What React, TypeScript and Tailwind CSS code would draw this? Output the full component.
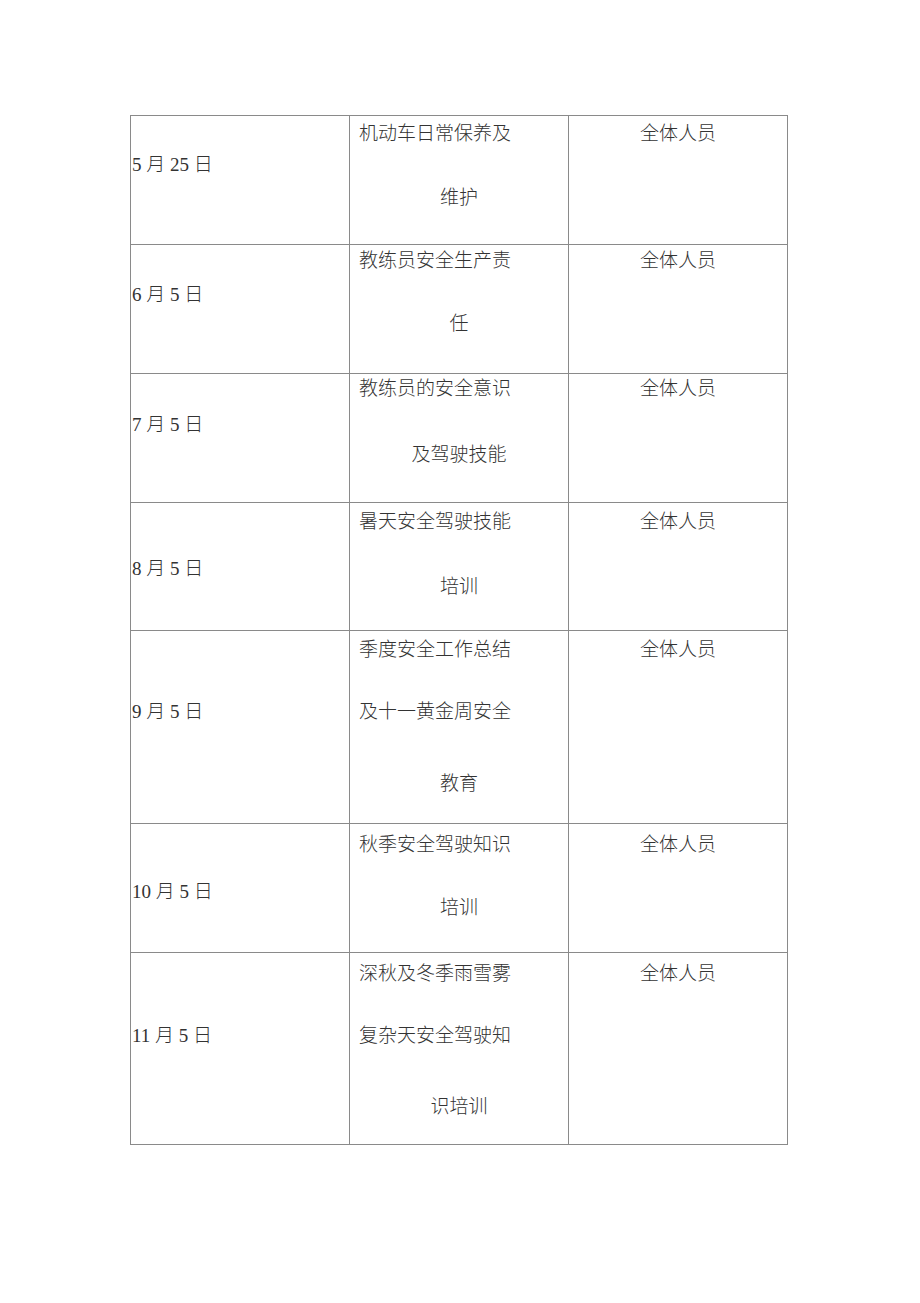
import React from "react";

const cjk = { fontFamily: '"Noto Sans CJK SC", "Noto Sans", sans-serif' };
const dateFont = { fontFamily: '"Liberation Serif", "Noto Sans CJK SC", serif' };

function Line({ children, className = "" }: { children: React.ReactNode; className?: string }) {
  return <div className={`h-[24px] leading-[24px] whitespace-nowrap ${className}`}>{children}</div>;
}

export default function App() {
  return (
    <div className="min-h-[1303px] w-[920px] bg-white text-[19px] font-light text-[#333333]" style={cjk}>
      <div className="pt-[115px] pl-[130px]">
        <div className="w-[658px] border-l border-t border-[#8a8a8a]">
          {/* Row 1 */}
          <div className="grid h-[129px] grid-cols-[219px_219px_219px]">
            <div className="border-r border-b border-[#8a8a8a] pl-[1px] pt-[35px]"><Line><span style={dateFont}>5 月 25 日</span></Line></div>
            <div className="flex flex-col border-r border-b border-[#8a8a8a] pt-[4px]">
              <Line className="pl-[9px]">机动车日常保养及</Line>
              <Line className="mt-[40px] text-center">维护</Line>
            </div>
            <div className="border-r border-b border-[#8a8a8a] pt-[4px]"><Line className="text-center">全体人员</Line></div>
          </div>
          {/* Row 2 */}
          <div className="grid h-[129px] grid-cols-[219px_219px_219px]">
            <div className="border-r border-b border-[#8a8a8a] pl-[1px] pt-[36px]"><Line><span style={dateFont}>6 月 5 日</span></Line></div>
            <div className="flex flex-col border-r border-b border-[#8a8a8a] pt-[2px]">
              <Line className="pl-[9px]">教练员安全生产责</Line>
              <Line className="mt-[39px] text-center">任</Line>
            </div>
            <div className="border-r border-b border-[#8a8a8a] pt-[2px]"><Line className="text-center">全体人员</Line></div>
          </div>
          {/* Row 3 */}
          <div className="grid h-[129px] grid-cols-[219px_219px_219px]">
            <div className="border-r border-b border-[#8a8a8a] pl-[1px] pt-[37px]"><Line><span style={dateFont}>7 月 5 日</span></Line></div>
            <div className="flex flex-col border-r border-b border-[#8a8a8a] pt-[1px]">
              <Line className="pl-[9px]">教练员的安全意识</Line>
              <Line className="mt-[42px] text-center">及驾驶技能</Line>
            </div>
            <div className="border-r border-b border-[#8a8a8a] pt-[1px]"><Line className="text-center">全体人员</Line></div>
          </div>
          {/* Row 4 */}
          <div className="grid h-[128px] grid-cols-[219px_219px_219px]">
            <div className="border-r border-b border-[#8a8a8a] pl-[1px] pt-[52px]"><Line><span style={dateFont}>8 月 5 日</span></Line></div>
            <div className="flex flex-col border-r border-b border-[#8a8a8a] pt-[5px]">
              <Line className="pl-[9px]">暑天安全驾驶技能</Line>
              <Line className="mt-[41px] text-center">培训</Line>
            </div>
            <div className="border-r border-b border-[#8a8a8a] pt-[5px]"><Line className="text-center">全体人员</Line></div>
          </div>
          {/* Row 5 */}
          <div className="grid h-[193px] grid-cols-[219px_219px_219px]">
            <div className="border-r border-b border-[#8a8a8a] pl-[1px] pt-[67px]"><Line><span style={dateFont}>9 月 5 日</span></Line></div>
            <div className="flex flex-col border-r border-b border-[#8a8a8a] pt-[5px]">
              <Line className="pl-[9px]">季度安全工作总结</Line>
              <Line className="mt-[38px] pl-[9px]">及十一黄金周安全</Line>
              <Line className="mt-[48px] text-center">教育</Line>
            </div>
            <div className="border-r border-b border-[#8a8a8a] pt-[5px]"><Line className="text-center">全体人员</Line></div>
          </div>
          {/* Row 6 */}
          <div className="grid h-[129px] grid-cols-[219px_219px_219px]">
            <div className="border-r border-b border-[#8a8a8a] pl-[1px] pt-[54px]"><Line><span style={dateFont}>10 月 5 日</span></Line></div>
            <div className="flex flex-col border-r border-b border-[#8a8a8a] pt-[7px]">
              <Line className="pl-[9px]">秋季安全驾驶知识</Line>
              <Line className="mt-[39px] text-center">培训</Line>
            </div>
            <div className="border-r border-b border-[#8a8a8a] pt-[7px]"><Line className="text-center">全体人员</Line></div>
          </div>
          {/* Row 7 */}
          <div className="grid h-[192px] grid-cols-[219px_219px_219px]">
            <div className="border-r border-b border-[#8a8a8a] pl-[1px] pt-[69px]"><Line><span style={dateFont}>11 月 5 日</span></Line></div>
            <div className="flex flex-col border-r border-b border-[#8a8a8a] pt-[7px]">
              <Line className="pl-[9px]">深秋及冬季雨雪雾</Line>
              <Line className="mt-[38px] pl-[9px]">复杂天安全驾驶知</Line>
              <Line className="mt-[47px] text-center">识培训</Line>
            </div>
            <div className="border-r border-b border-[#8a8a8a] pt-[7px]"><Line className="text-center">全体人员</Line></div>
          </div>
        </div>
      </div>
    </div>
  );
}
